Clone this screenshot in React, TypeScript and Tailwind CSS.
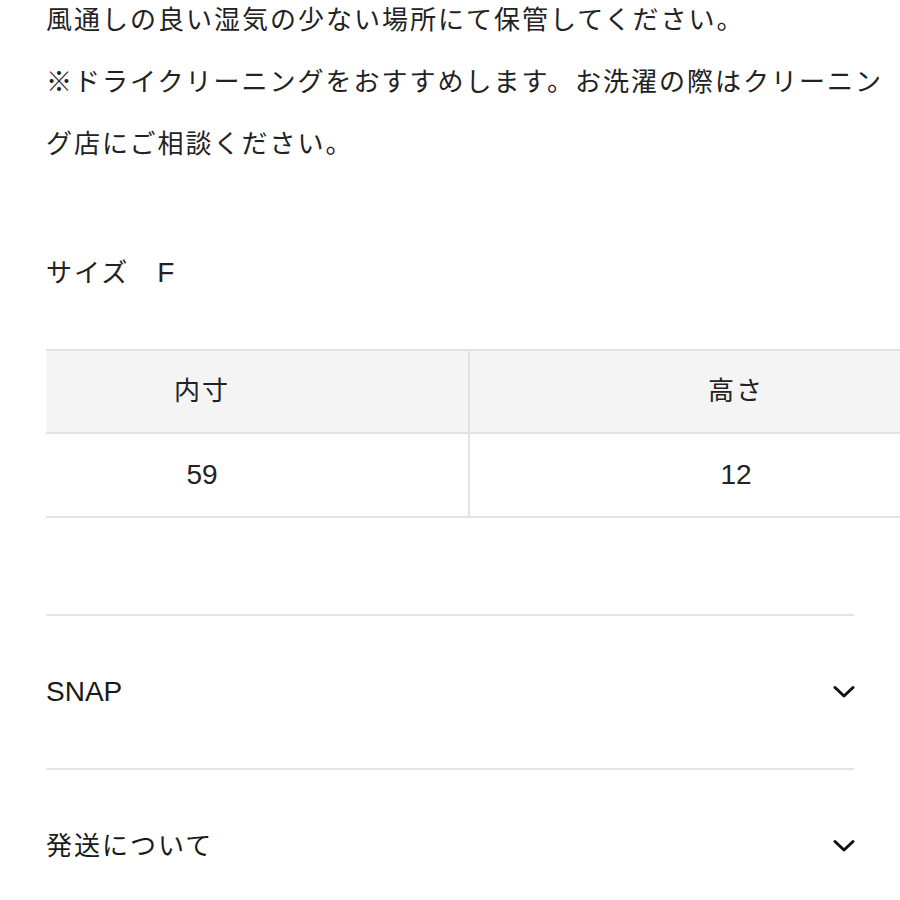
import React from 'react'

const Chevron = () => (
  <svg width="22" height="14" viewBox="0 0 22 14" fill="none" className="mr-[-1px]">
    <path d="M2 2.5L11 11L20 2.5" stroke="#111" strokeWidth="3" strokeLinecap="round" strokeLinejoin="round" />
  </svg>
)

function AccordionRow({ label, latin }: { label: string; latin?: boolean }) {
  return (
    <div className="flex h-[154px] items-center justify-between border-t-2 border-[#e5e5e5]">
      <span className={latin ? 'text-[28px] text-[#1a1a1a]' : 'text-[26px] tracking-[2px] text-[#1a1a1a]'}>{label}</span>
      <Chevron />
    </div>
  )
}

export default function App() {
  return (
    <div
      className="h-[900px] w-[900px] overflow-hidden bg-white text-[#222]"
      style={{ fontFamily: '"Liberation Sans", "Noto Sans CJK JP", sans-serif' }}
    >
      {/* care notes */}
      <div className="-mt-[11px] pl-[46px] text-[26px] leading-[62px] tracking-[2px]">
        <p>風通しの良い湿気の少ない場所にて保管してください。</p>
        <p>※ドライクリーニングをおすすめします。お洗濯の際はクリーニング店にご相談ください。</p>
      </div>

      <p className="mt-[67px] pl-[46px] text-[26px] leading-[62px] tracking-[2px]">
        サイズ　<span className="text-[28px] tracking-normal">F</span>
      </p>

      {/* size table */}
      <div className="ml-[46px] mt-[45px] w-[956px] border-t-2 border-[#e3e3e3]">
        <div className="grid h-[83px] grid-cols-[424px_532px] border-b-2 border-[#e3e3e3] bg-[#f4f4f4] text-[26px] tracking-[2px]">
          <div className="flex items-center justify-center border-r-2 border-[#e3e3e3] pr-[110px]">内寸</div>
          <div className="flex items-center justify-center">高さ</div>
        </div>
        <div className="grid h-[84px] grid-cols-[424px_532px] border-b-2 border-[#e3e3e3] text-[28px]">
          <div className="flex items-center justify-center border-r-2 border-[#e3e3e3] pr-[110px]">59</div>
          <div className="flex items-center justify-center">12</div>
        </div>
      </div>

      {/* accordions */}
      <div className="ml-[46px] mt-[96px] w-[808px]">
        <AccordionRow label="SNAP" latin />
        <AccordionRow label="発送について" />
      </div>
    </div>
  )
}
